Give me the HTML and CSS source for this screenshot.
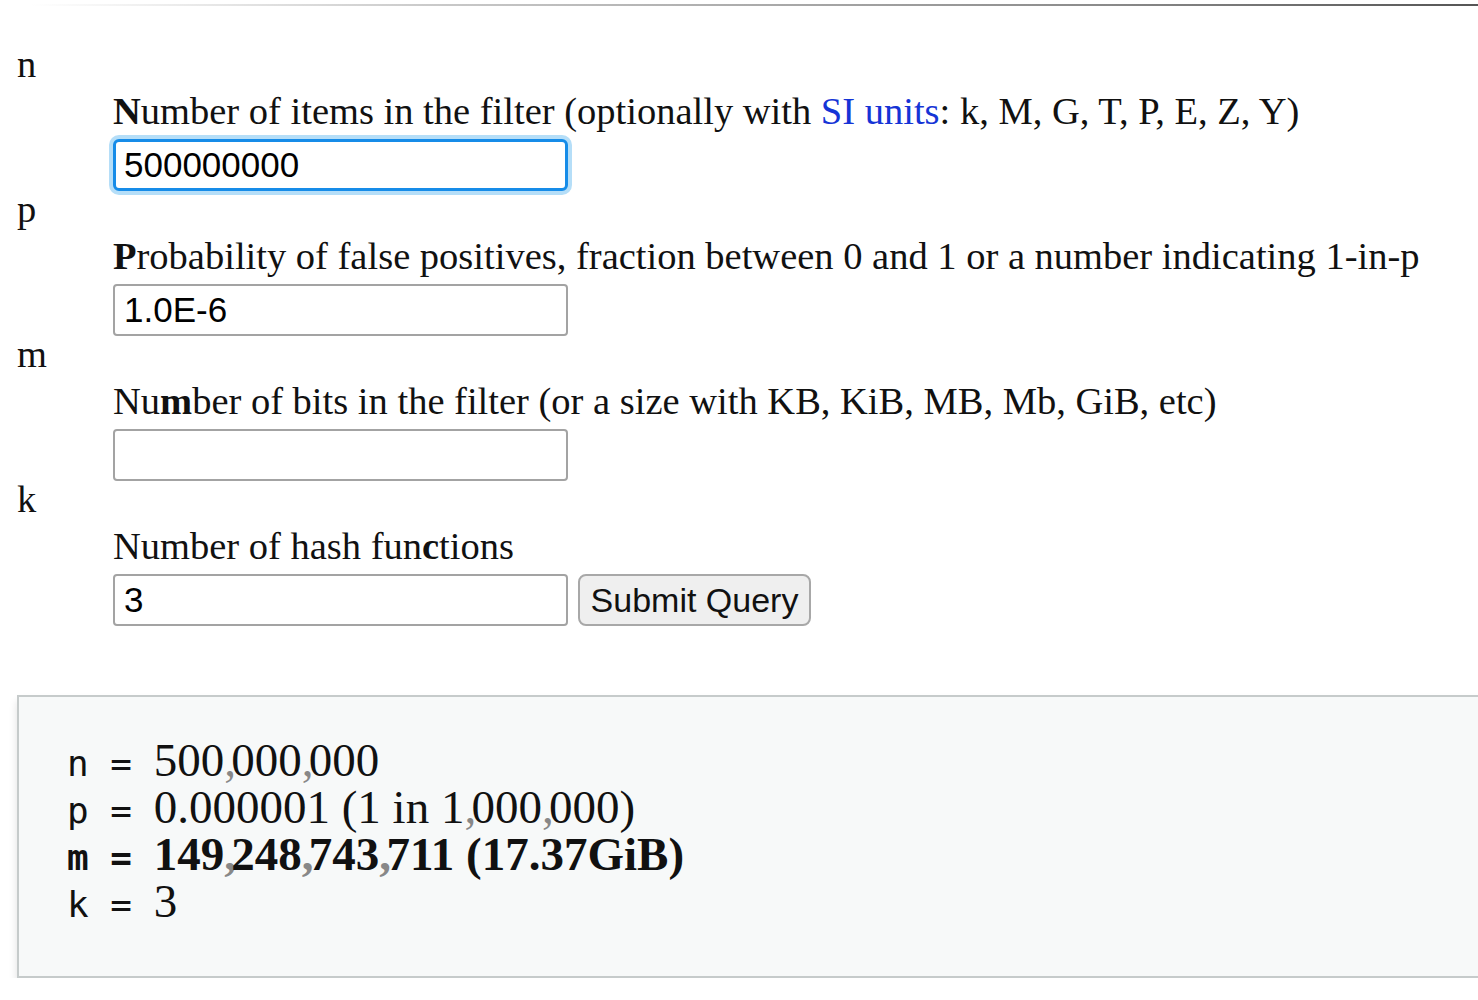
FILE: index.html
```html
<!DOCTYPE html>
<html>
<head>
    <meta name="viewport" content="width=device-width, initial-scale=1.0">
    <link rel="stylesheet" href="styles.css">
</head>
<body>

<hr class="rule">

<form id="bloomForm" class="calc" action="" method="get">
    <dl class="fields">
        <div class="field">
            <dt>n</dt>
            <dd>
                <label for="n"><b>N</b>umber of items in the filter (optionally with <a href="#">SI units</a>: k, M, G, T, P, E, Z, Y)</label>
                <div class="input-row">
                    <input type="text" id="n" name="n" value="500000000" class="focused">
                </div>
            </dd>
        </div>
        <div class="field">
            <dt>p</dt>
            <dd>
                <label for="p"><b>P</b>robability of false positives, fraction between 0 and 1 or a number indicating 1-in-p</label>
                <div class="input-row">
                    <input type="text" id="p" name="p" value="1.0E-6">
                </div>
            </dd>
        </div>
        <div class="field">
            <dt>m</dt>
            <dd>
                <label for="m">Nu<b>m</b>ber of bits in the filter (or a size with KB, KiB, MB, Mb, GiB, etc)</label>
                <div class="input-row">
                    <input type="text" id="m" name="m" value="">
                </div>
            </dd>
        </div>
        <div class="field">
            <dt>k</dt>
            <dd>
                <label for="k">Number of hash fun<b>c</b>tions</label>
                <div class="input-row">
                    <input type="text" id="k" name="k" value="3">
                    <button type="submit">Submit Query</button>
                </div>
            </dd>
        </div>
    </dl>
</form>

<div class="result">
    <div class="line"><span class="key">n = </span><span class="val">500<span class="sep">,</span>000<span class="sep">,</span>000</span></div>
    <div class="line"><span class="key">p = </span><span class="val">0.000001 (1 in 1<span class="sep">,</span>000<span class="sep">,</span>000)</span></div>
    <div class="line strong"><span class="key">m = </span><span class="val">149<span class="sep">,</span>248<span class="sep">,</span>743<span class="sep">,</span>711 (17.37GiB)</span></div>
    <div class="line"><span class="key">k = </span><span class="val">3</span></div>
</div>

</body>
</html>
```

FILE: styles.css
```css
* {
    box-sizing: border-box;
}

html, body {
    overflow: hidden;
}

body {
    margin: 0;
    font-family: "Liberation Serif", "Times New Roman", serif;
    font-size: 38.5px;
    line-height: 47px;
    color: #111;
    background-color: #ffffff;
}

.rule {
    height: 2px;
    margin: 4px 0 0;
    border: none;
    background: linear-gradient(to right, rgba(120, 120, 120, 0) 2%, #c8c8c8 30%, #8a8a8a 75%, #555 100%);
}

.calc {
    padding: 35px 0 0 17px;
}

.fields {
    margin: 0;
}

.field + .field {
    margin-top: -5px;
}

dt {
    height: 47px;
}

dd {
    margin: 0 0 0 96px;
}

label {
    display: block;
    white-space: nowrap;
}

label a {
    color: #1534d6;
    text-decoration: none;
}

.input-row {
    display: flex;
    gap: 10px;
    margin-top: 4px;
}

input {
    width: 455px;
    height: 52px;
    padding: 0 9px;
    border: 2px solid #a3a3a3;
    border-radius: 4px;
    font-family: "Liberation Sans", Arial, sans-serif;
    font-size: 35px;
    color: #000;
    background: #fff;
    outline: none;
}

input.focused {
    border: 3px solid #168ce8;
    border-radius: 6px;
    padding: 0 8px;
    box-shadow: 0 0 0 4px #b5def8;
}

button {
    width: 233px;
    height: 52px;
    padding: 0;
    border: 2px solid #a8a8a8;
    border-radius: 8px;
    background-color: #efefef;
    font-family: "Liberation Sans", Arial, sans-serif;
    font-size: 34px;
    color: #111;
    cursor: pointer;
}

.result {
    width: 1540px;
    height: 283px;
    margin: 69px 0 0 17px;
    padding: 40px 0 0 48px;
    border: 2px solid #c6cbcb;
    background-color: #f7f9f9;
    box-shadow: 0 6px 8px rgba(0, 0, 0, 0.12);
}

.line {
    height: 47px;
    white-space: pre;
}

.key {
    font-family: "DejaVu Sans Mono", "Liberation Mono", monospace;
    font-size: 36px;
}

.val {
    font-size: 47px;
}

.sep {
    color: #888;
    margin-right: -0.1em;
}

.strong {
    font-weight: bold;
}
```
